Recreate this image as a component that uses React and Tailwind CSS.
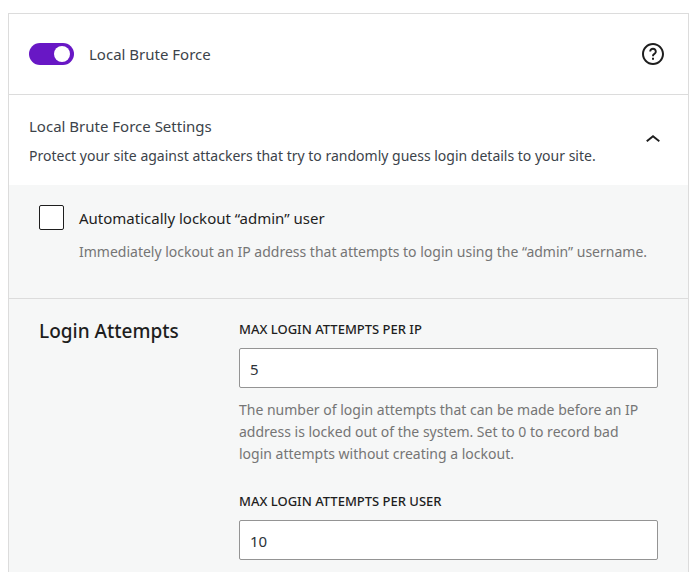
import React, { useState } from 'react';

const HelpIcon = () => (
  <svg viewBox="0 0 24 24" className="w-[30px] h-[30px]" fill="currentColor" aria-hidden="true">
    <path d="M12 3.2c-4.8 0-8.8 3.9-8.8 8.8 0 4.8 3.9 8.8 8.8 8.8 4.8 0 8.8-3.9 8.8-8.8 0-4.8-4-8.8-8.8-8.8zm0 16c-4 0-7.2-3.3-7.2-7.2C4.8 8 8 4.8 12 4.8s7.2 3.3 7.2 7.2c0 4-3.2 7.2-7.2 7.2zM11.200 16.600h1.600v-1.600h-1.600v1.600zM12 7c-1.700 0-3 1.300-3 3h1.500c0-.8.7-1.500 1.500-1.500s1.500.7 1.500 1.500c0 .5-.4 1-1 1.400-.7.5-1.200 1-1.200 1.700v.7h1.500v-.6c.1-.2.3-.5.7-.7.9-.6 1.500-1.500 1.500-2.500 0-1.700-1.300-3-3-3z" />
  </svg>
);

const ChevronIcon = () => (
  <svg viewBox="0 0 24 24" className="w-[30px] h-[30px]" fill="currentColor" aria-hidden="true">
    <path d="M6.5 12.4L12 8l5.5 4.4-.9 1.2L12 10l-4.5 3.6-1-1.2z" />
  </svg>
);

const NumberField = ({ id, label, value, help }) => (
  <div>
    <label htmlFor={id} className="block text-[13px] leading-5 font-medium uppercase text-[#1e1e1e] mb-[9px]">{label}</label>
    <input
      id={id}
      type="text"
      inputMode="numeric"
      defaultValue={value}
      className="block w-full h-10 px-[10px] pt-[2px] text-[15px] text-[#2c3338] bg-white border border-[#949494] rounded-xs"
    />
    {help && <p className="mt-[11px] pr-2 text-sm leading-[22px] text-[#757575]">{help}</p>}
  </div>
);

const App = () => {
  const [enabled, setEnabled] = useState(true);
  const [open, setOpen] = useState(true);

  return (
    <div className="px-2 pt-[13px] bg-white font-['Noto_Sans',sans-serif] text-[#3c434a]">
      <section className="border border-b-0 border-[#dcdcdc]">
        <header className="flex items-center justify-between h-20 px-5">
          <label className="flex items-center gap-[15px] text-[15px] cursor-pointer">
            <input
              type="checkbox"
              role="switch"
              checked={enabled}
              onChange={(e) => setEnabled(e.target.checked)}
              className="appearance-none w-[45px] h-[22px] rounded-full bg-gray-400 checked:bg-[#6817c5] before:block before:size-4 before:m-[3px] before:rounded-full before:bg-white checked:before:ml-[25px]"
            />
            Local Brute Force
          </label>
          <button type="button" aria-label="Help" className="text-[#1e1e1e]">
            <HelpIcon />
          </button>
        </header>

        <div className="flex items-center justify-between h-[91px] px-5 border-t border-[#dcdcdc]">
          <div className="pt-[2px]">
            <h2 className="text-[15px] leading-[22px] mb-2">Local Brute Force Settings</h2>
            <p className="text-sm leading-[22px]">Protect your site against attackers that try to randomly guess login details to your site.</p>
          </div>
          <button type="button" aria-label="Toggle settings" aria-expanded={open} onClick={() => setOpen(!open)} className="text-[#1e1e1e]">
            <ChevronIcon />
          </button>
        </div>

        {open && (
          <div className="bg-[#f6f7f7]">
            <div className="flex gap-[15px] px-[30px] pt-5 pb-[35px] border-b border-[#dcdcdc]">
              <input id="lockout" type="checkbox" className="appearance-none shrink-0 size-[25px] bg-white border border-[#1e1e1e] rounded-xs checked:bg-[#6817c5]" />
              <div>
                <label htmlFor="lockout" className="block text-[15px] leading-[26px] mb-[10px] text-[#1e1e1e]">Automatically lockout “admin” user</label>
                <p className="text-sm leading-[22px] text-[#757575]">Immediately lockout an IP address that attempts to login using the “admin” username.</p>
              </div>
            </div>

            <div className="flex px-[30px] pt-5 pb-3">
              <h3 className="w-[200px] shrink-0 text-[19px] leading-6 font-medium text-[#1e1e1e]">Login Attempts</h3>
              <div className="grow flex flex-col gap-[26px]">
                <NumberField
                  id="max-ip"
                  label="Max login attempts per IP"
                  value="5"
                  help="The number of login attempts that can be made before an IP address is locked out of the system. Set to 0 to record bad login attempts without creating a lockout."
                />
                <NumberField id="max-user" label="Max login attempts per user" value="10" />
              </div>
            </div>
          </div>
        )}
      </section>
    </div>
  );
};

export default App;
